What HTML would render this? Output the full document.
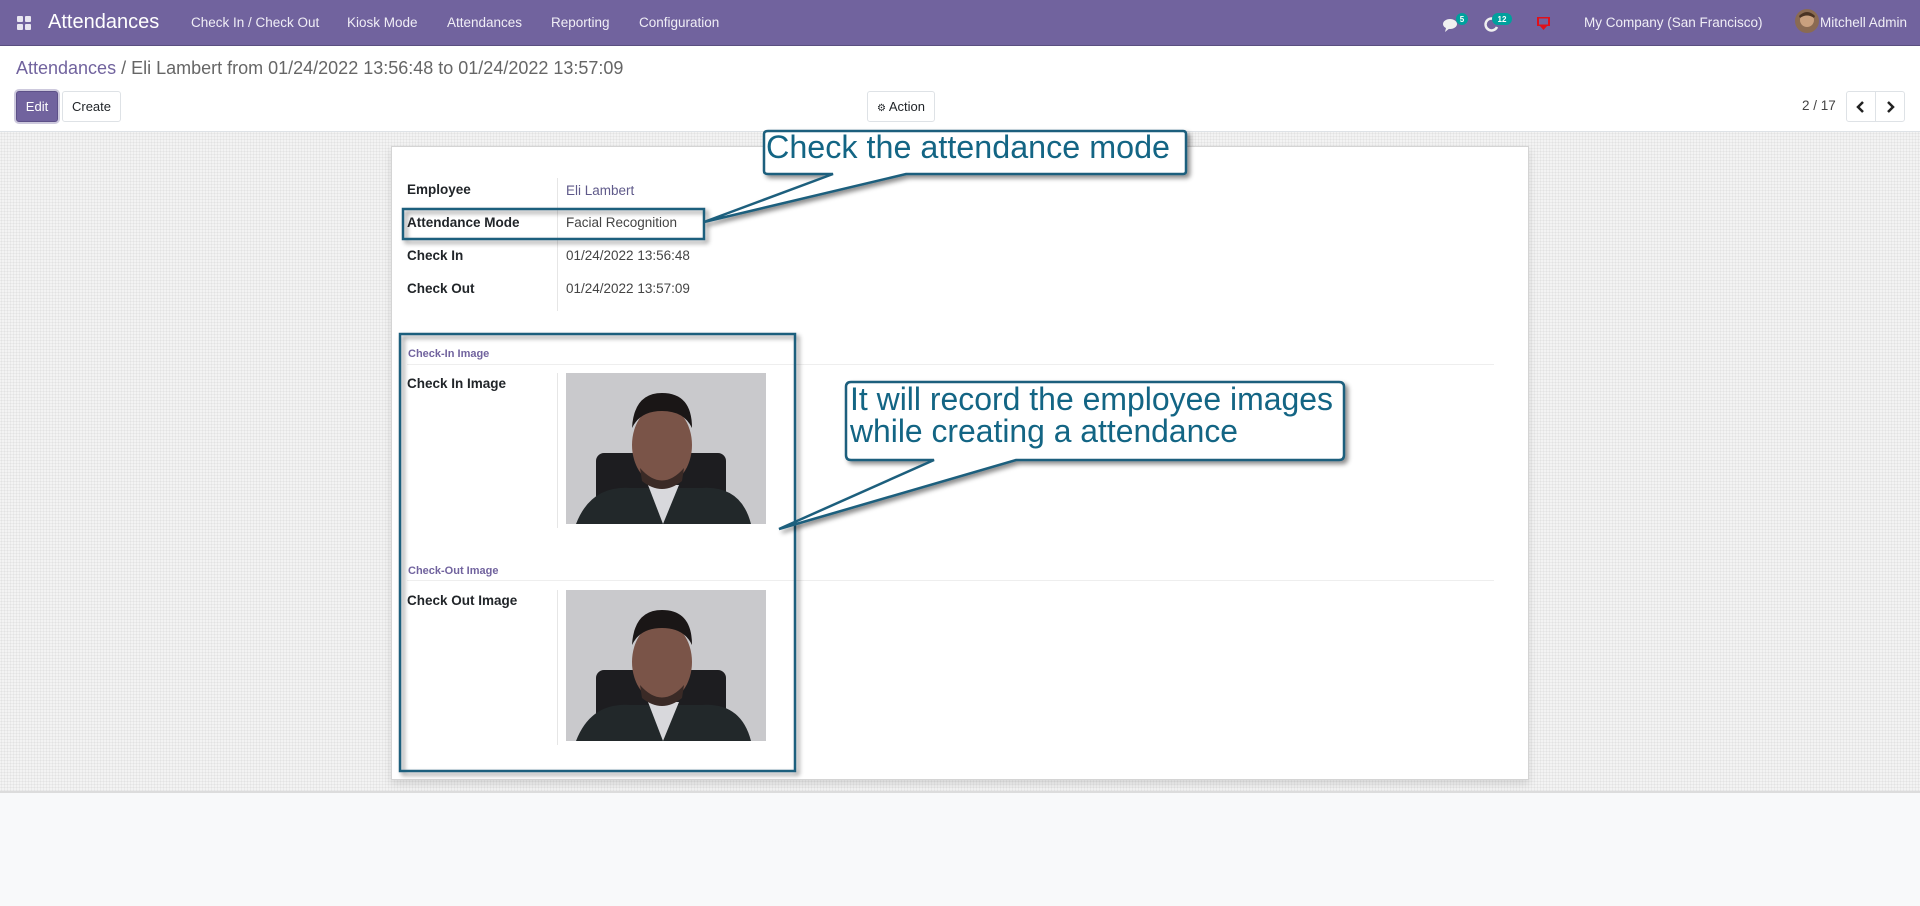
<!DOCTYPE html>
<html><head><meta charset="utf-8">
<style>
*{box-sizing:border-box;margin:0;padding:0}
body{width:1920px;height:906px;overflow:hidden;font-family:"Liberation Sans",Arial,sans-serif;background:#f8f9fa;position:relative;color:#212529}
.nav{position:absolute;left:0;top:0;width:1920px;height:46px;background:#71639e;color:#fff;border-bottom:1px solid #5a4f80}
.nav span{position:absolute;top:15px;font-size:13.5px;color:#f0eef6}
.cp{position:absolute;left:0;top:46px;width:1920px;height:86px;background:#fff;border-bottom:1px solid #dee2e6}
.bg{position:absolute;left:0;top:132px;width:1920px;height:661px;background-color:#f3f3f3;background-image:radial-gradient(#e2e2e2 0.8px,transparent 0.9px);background-size:3px 3px;border-bottom:2px solid #dcdcdc}
.btn{position:absolute;height:31px;border:1px solid #dee2e6;border-radius:3px;background:#fff;font-size:13px;line-height:29px;text-align:center;color:#212529}
.sheet{position:absolute;left:391px;top:146px;width:1138px;height:634px;background:#fff;border:1px solid #d4d4d4;box-shadow:0 4px 8px rgba(0,0,0,.12)}
.lbl{position:absolute;left:407px;font-weight:bold;font-size:13.5px;color:#212529}
.val{position:absolute;left:566px;font-size:13.5px;color:#444}
.sep{position:absolute;font-weight:bold;font-size:11px;color:#71639e}
.hl{position:absolute;left:407px;width:1087px;height:1px;background:#eee}
.vl{position:absolute;left:557px;width:1px;background:#e6e6e6}
</style></head><body>
<div class="nav">
  <svg style="position:absolute;left:17px;top:16px" width="15" height="15"><rect x="0" y="0" width="6" height="6" rx="1" fill="#e8e6f0"/><rect x="8" y="0" width="6" height="6" rx="1" fill="#e8e6f0"/><rect x="0" y="8" width="6" height="6" rx="1" fill="#e8e6f0"/><rect x="8" y="8" width="6" height="6" rx="1" fill="#e8e6f0"/></svg>
  <span style="left:48px;top:11px;font-size:20px;color:#fff">Attendances</span>
  <span style="left:191px">Check In / Check Out</span>
  <span style="left:347px">Kiosk Mode</span>
  <span style="left:447px">Attendances</span>
  <span style="left:551px">Reporting</span>
  <span style="left:639px">Configuration</span>
  <svg style="position:absolute;left:1442px;top:13px" width="30" height="20"><ellipse cx="8" cy="11" rx="7" ry="5" fill="#f0f0f0"/><path d="M4 15 L3 19 L8 15Z" fill="#f0f0f0"/><circle cx="20" cy="6" r="6" fill="#00a09d"/><text x="20" y="9" font-size="8" fill="#fff" text-anchor="middle" font-weight="bold" font-family="Liberation Sans">5</text></svg>
  <svg style="position:absolute;left:1482px;top:11px" width="30" height="22"><path d="M12 8 A6 6 0 1 0 15 16" stroke="#f0f0f0" stroke-width="2.5" fill="none"/><rect x="10" y="2" width="20" height="12" rx="6" fill="#00a09d"/><text x="20" y="11" font-size="8" fill="#fff" text-anchor="middle" font-weight="bold" font-family="Liberation Sans">12</text></svg>
  <svg style="position:absolute;left:1536px;top:16px" width="16" height="15"><rect x="1" y="1" width="13" height="9" fill="#e0101a"/><rect x="3" y="2.5" width="9" height="6" fill="#71639e"/><path d="M4 10 L11 10 L7.5 14Z" fill="#e0101a"/></svg>
  <span style="left:1584px;font-size:13.5px">My Company (San Francisco)</span>
  <svg style="position:absolute;left:1794px;top:8px" width="26" height="26"><circle cx="13" cy="13" r="12" fill="#8a6a52"/><circle cx="13" cy="12" r="7" fill="#c9a07f"/><path d="M5 8 Q13 0 21 8 L20 10 Q13 5 6 10Z" fill="#4a3324"/></svg>
  <span style="left:1820px;font-size:13.5px">Mitchell Admin</span>
</div>
<div class="cp">
  <div style="position:absolute;left:16px;top:12px;font-size:18px;color:#666"><span style="color:#71639e">Attendances</span> / Eli Lambert from 01/24/2022 13:56:48 to 01/24/2022 13:57:09</div>
</div>
<div class="btn" style="left:16px;top:91px;width:42px;background:#71639e;color:#fff;border-color:#5d5088;box-shadow:0 0 0 2px rgba(113,99,158,.35)">Edit</div>
<div class="btn" style="left:62px;top:91px;width:59px">Create</div>
<div class="btn" style="left:867px;top:91px;width:68px"><span style="font-size:10px">&#9881;</span> Action</div>
<div style="position:absolute;left:1802px;top:98px;font-size:13.5px;color:#444">2 / 17</div>
<div class="btn" style="left:1846px;top:91px;width:30px;border-radius:3px 0 0 3px"><svg width="12" height="12" style="margin-top:9px"><path d="M8 1 L3 6 L8 11" stroke="#222" stroke-width="2.5" fill="none"/></svg></div>
<div class="btn" style="left:1875px;top:91px;width:30px;border-radius:0 3px 3px 0"><svg width="12" height="12" style="margin-top:9px"><path d="M4 1 L9 6 L4 11" stroke="#222" stroke-width="2.5" fill="none"/></svg></div>
<div class="bg"></div>
<div class="sheet"></div>
<div class="vl" style="top:178px;height:133px"></div>
<div class="lbl" style="top:182px">Employee</div><div class="val" style="top:183px;color:#5f5a8a">Eli Lambert</div>
<div class="lbl" style="top:215px">Attendance Mode</div><div class="val" style="top:215px">Facial Recognition</div>
<div class="lbl" style="top:248px">Check In</div><div class="val" style="top:248px">01/24/2022 13:56:48</div>
<div class="lbl" style="top:281px">Check Out</div><div class="val" style="top:281px">01/24/2022 13:57:09</div>
<div class="sep" style="left:408px;top:348px">Check-In Image</div><div class="hl" style="top:364px"></div>
<div class="vl" style="top:373px;height:155px"></div>
<div class="lbl" style="top:376px">Check In Image</div>
<div class="sep" style="left:408px;top:565px">Check-Out Image</div><div class="hl" style="top:580px"></div>
<div class="vl" style="top:590px;height:155px"></div>
<div class="lbl" style="top:593px">Check Out Image</div>
<svg style="position:absolute;left:566px;top:373px" width="200" height="151" viewBox="0 0 200 151"><rect width="200" height="151" fill="#c9c9cc"/><rect x="30" y="80" width="130" height="71" rx="8" fill="#1d1d20"/><path d="M10 151 Q25 112 65 115 L135 115 Q175 112 185 151Z" fill="#22282a"/><path d="M82 112 L97 151 L113 112Z" fill="#d8d8dc"/><ellipse cx="96" cy="72" rx="30" ry="40" fill="#7a5448"/><path d="M66 55 Q68 20 96 20 Q126 20 126 55 Q118 38 96 38 Q74 38 66 55Z" fill="#1a1616"/><path d="M74 95 Q96 120 118 95 L116 108 Q96 124 76 108Z" fill="#3a2a26"/></svg>
<svg style="position:absolute;left:566px;top:590px" width="200" height="151" viewBox="0 0 200 151"><rect width="200" height="151" fill="#c9c9cc"/><rect x="30" y="80" width="130" height="71" rx="8" fill="#1d1d20"/><path d="M10 151 Q25 112 65 115 L135 115 Q175 112 185 151Z" fill="#22282a"/><path d="M82 112 L97 151 L113 112Z" fill="#d8d8dc"/><ellipse cx="96" cy="72" rx="30" ry="40" fill="#7a5448"/><path d="M66 55 Q68 20 96 20 Q126 20 126 55 Q118 38 96 38 Q74 38 66 55Z" fill="#1a1616"/><path d="M74 95 Q96 120 118 95 L116 108 Q96 124 76 108Z" fill="#3a2a26"/></svg>
<svg style="position:absolute;left:0;top:0;pointer-events:none" width="1920" height="906">
  <defs><filter id="sh" x="-10%" y="-10%" width="130%" height="140%"><feDropShadow dx="3" dy="3" stdDeviation="2.5" flood-color="#000" flood-opacity="0.45"/></filter></defs>
  <rect x="403" y="209" width="301" height="30" fill="none" stroke="#1f5f7d" stroke-width="2.5" filter="url(#sh)"/>
  <rect x="400" y="334" width="395" height="437" fill="none" stroke="#1f5f7d" stroke-width="2.5" filter="url(#sh)"/>
  <path d="M768 131 L1183 131 Q1186 131 1186 134 L1186 171 Q1186 174 1183 174 L906 174 L704 222 L833 174 L768 174 Q764 174 764 171 L764 134 Q764 131 768 131Z" fill="#fff" stroke="#1f5f7d" stroke-width="2.5" filter="url(#sh)"/>
  <text x="766" y="158" font-family="Liberation Sans" font-size="32" fill="#136584" textLength="404" lengthAdjust="spacingAndGlyphs">Check the attendance mode</text>
  <path d="M851 382 L1339 382 Q1344 382 1344 387 L1344 455 Q1344 460 1339 460 L1016 460 L779 529 L934 460 L851 460 Q846 460 846 455 L846 387 Q846 382 851 382Z" fill="#fff" stroke="#1f5f7d" stroke-width="2.5" filter="url(#sh)"/>
  <text x="850" y="410" font-family="Liberation Sans" font-size="32" fill="#136584" textLength="483" lengthAdjust="spacingAndGlyphs">It will record the employee images</text>
  <text x="850" y="442" font-family="Liberation Sans" font-size="32" fill="#136584" textLength="388" lengthAdjust="spacingAndGlyphs">while creating a attendance</text>
</svg>
</body></html>
